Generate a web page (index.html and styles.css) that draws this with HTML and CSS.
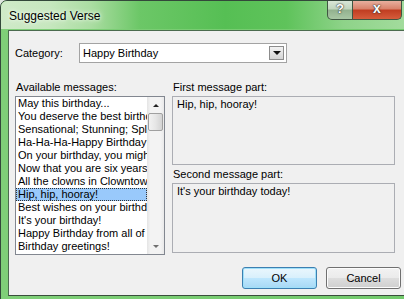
FILE: index.html
```html
<!DOCTYPE html>
<html lang="en">
<head>
    <meta charset="UTF-8">
    <title>Suggested Verse</title>
    <link rel="stylesheet" href="styles.css">
</head>
<body>

    <div class="window">
        <div class="titlebar">
            <span class="caption">Suggested Verse</span>
            <div class="caption-buttons">
                <div class="btn-help">?</div>
                <div class="btn-close">x</div>
            </div>
        </div>

        <div class="client">
            <div class="row-category">
                <label class="category-label">Category:</label>
                <div class="combo">
                    <span class="combo-text">Happy Birthday</span>
                    <span class="combo-btn"><span class="tri-down"></span></span>
                </div>
            </div>

            <div class="panes">
                <div class="pane-left">
                    <div class="label">Available messages:</div>
                    <div class="listbox">
                        <ul class="items">
                            <li>May this birthday...</li>
                            <li>You deserve the best birthday ever!</li>
                            <li>Sensational; Stunning; Splendid...</li>
                            <li>Ha-Ha-Ha-Happy Birthday!</li>
                            <li>On your birthday, you might...</li>
                            <li>Now that you are six years old...</li>
                            <li>All the clowns in Clowntown...</li>
                            <li class="selected">Hip, hip, hooray!</li>
                            <li>Best wishes on your birthday!</li>
                            <li>It's your birthday!</li>
                            <li>Happy Birthday from all of us!</li>
                            <li>Birthday greetings!</li>
                        </ul>
                        <div class="scrollbar">
                            <div class="sb-arrow"><span class="tri-up"></span></div>
                            <div class="sb-thumb"></div>
                            <div class="sb-track"></div>
                            <div class="sb-arrow"><span class="tri-down light"></span></div>
                        </div>
                    </div>
                </div>

                <div class="pane-right">
                    <div class="label">First message part:</div>
                    <div class="textbox first">Hip, hip, hooray!</div>
                    <div class="label">Second message part:</div>
                    <div class="textbox second">It's your birthday today!</div>
                </div>
            </div>

            <div class="buttons">
                <button class="btn default">OK</button>
                <button class="btn">Cancel</button>
            </div>
        </div>
    </div>

</body>
</html>
```

FILE: styles.css
```css
body {
    margin: 0;
    background: #dfe6df;
    font-family: "Liberation Sans", Arial, sans-serif;
    font-size: 11px;
    color: #000;
}
.window {
    width: 410px;
    height: 300px;
    box-sizing: border-box;
    border: 1px solid #33483a;
    border-radius: 7px 7px 0 0;
    background: linear-gradient(90deg, #7fcf78 0%, #72ca6c 100%);
    display: flex;
    flex-direction: column;
    overflow: hidden;
}
.titlebar {
    height: 28px;
    display: flex;
    align-items: flex-start;
    background: linear-gradient(90deg, #cfeac8 0%, #c6e7be 12%, #abdda2 22%, #6cc767 34%, #56bf54 55%, #5fc35b 70%, #8ed389 84%, #a4dc9e 100%);
}
.caption {
    font-size: 12px;
    margin: 8px 0 0 8px;
    color: #000;
    text-shadow: 0 0 6px #f4fff2, 0 0 3px #f4fff2;
}
.caption-buttons {
    margin-left: auto;
    margin-right: 7px;
    display: flex;
    margin-top: -1px;
}
.btn-help,
.btn-close {
    height: 19px;
    border: 1px solid #3f5642;
    border-top: none;
    color: #fff;
    font-weight: bold;
    font-size: 13px;
    text-align: center;
    line-height: 17px;
    text-shadow: 0 0 1px #222, 0 0 2px #333;
}
.btn-help {
    width: 24px;
    border-radius: 0 0 0 5px;
    background: linear-gradient(180deg, #dce8da 0%, #c2d6bf 45%, #93b28f 55%, #a9c7a5 100%);
}
.btn-close {
    width: 48px;
    border-left: none;
    border-radius: 0 0 5px 0;
    background: linear-gradient(180deg, #eab5a5 0%, #d9846d 45%, #c13e22 55%, #d65d3c 100%);
    font-size: 14px;
}
.client {
    margin: 1px 3px 3px 7px;
    flex: 1;
    background: #f0f0f0;
    border: 1px solid #4b6b4e;
    border-bottom-color: #3a4f3c;
    padding: 12px 4px 0 6px;
}
.row-category {
    display: flex;
    align-items: center;
    height: 20px;
}
.category-label {
    width: 64px;
}
.combo {
    width: 208px;
    height: 20px;
    box-sizing: border-box;
    border: 1px solid #a3a3a3;
    background: #fff;
    display: flex;
    align-items: center;
}
.combo-text {
    flex: 1;
    padding-left: 3px;
}
.combo-btn {
    width: 15px;
    height: 14px;
    box-sizing: border-box;
    margin-right: 2px;
    border: 1px solid #8c8c8c;
    background: linear-gradient(180deg, #f2f2f2, #d4d4d4);
    display: flex;
    align-items: center;
    justify-content: center;
}
.tri-down {
    width: 0;
    height: 0;
    border-left: 4px solid transparent;
    border-right: 4px solid transparent;
    border-top: 4px solid #111;
}
.tri-down.light {
    border-top-color: #6f6f6f;
    border-left-width: 3px;
    border-right-width: 3px;
    border-top-width: 3px;
}
.tri-up {
    width: 0;
    height: 0;
    border-left: 3px solid transparent;
    border-right: 3px solid transparent;
    border-bottom: 3px solid #222;
}
.panes {
    display: flex;
    gap: 7px;
    margin-top: 17px;
}
.label {
    line-height: 15px;
    margin-bottom: 1px;
    padding-left: 1px;
}
.pane-left {
    width: 150px;
}
.listbox {
    height: 159px;
    box-sizing: border-box;
    border: 1px solid #828790;
    background: #fff;
    display: flex;
}
.items {
    list-style: none;
    margin: 0;
    padding: 0;
    flex: 1;
    overflow: hidden;
}
.items li {
    height: 13px;
    line-height: 13px;
    padding-left: 2px;
    white-space: nowrap;
    overflow: hidden;
}
.items li.selected {
    background: #99c9fb;
    outline: 1px dotted #333;
    outline-offset: -1px;
}
.scrollbar {
    width: 17px;
    display: flex;
    flex-direction: column;
    background: linear-gradient(90deg, #e4e4e4 0%, #f3f3f3 20%, #f3f3f3 80%, #e9e9e9 100%);
}
.sb-arrow {
    height: 16px;
    display: flex;
    align-items: center;
    justify-content: center;
}
.sb-thumb {
    height: 16px;
    margin: 0 1px;
    border: 1px solid #a0a0a0;
    border-radius: 2px;
    background: linear-gradient(90deg, #f2f2f2 0%, #e6e6e6 50%, #d3d3d3 100%);
}
.sb-track {
    flex: 1;
}
.pane-right {
    width: 223px;
}
.textbox {
    box-sizing: border-box;
    border: 1px solid #abadb3;
    background: #f0f0f0;
    padding: 1px 4px;
    line-height: 13px;
}
.textbox.first {
    height: 69px;
    margin-bottom: 2px;
}
.textbox.second {
    height: 70px;
    margin-top: 1px;
}
.buttons {
    display: flex;
    justify-content: flex-end;
    gap: 9px;
    margin-top: 12px;
}
.btn {
    width: 75px;
    height: 22px;
    font-family: "Liberation Sans", Arial, sans-serif;
    font-size: 11px;
    color: #000;
    border: 1px solid #707070;
    border-radius: 3px;
    background: linear-gradient(180deg, #f2f2f2 0%, #ebebeb 48%, #dddddd 52%, #cfcfcf 100%);
    box-shadow: inset 0 0 0 1px #fcfcfc;
    padding: 0;
}
.btn.default {
    border-color: #3c7fb1;
    background: linear-gradient(180deg, #eaf6fd 0%, #d9f0fc 48%, #bee6fd 52%, #a7d9f5 100%);
    box-shadow: inset 0 0 0 1px #9fe0f9;
}
```
